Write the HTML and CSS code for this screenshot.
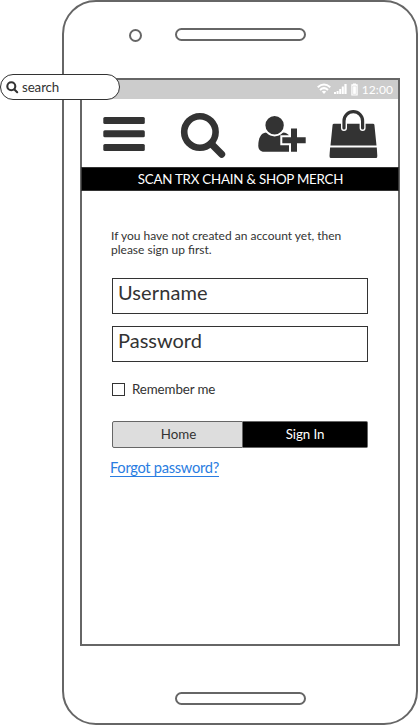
FILE: index.html
```html
<!DOCTYPE html>
<html lang="en">
<head>
<meta charset="utf-8">
<title>Sign in</title>
<link rel="stylesheet" href="styles.css">
</head>
<body>
<main class="phone">
  <header class="phone-top"><span class="camera"></span><span class="speaker"></span></header>
  <section class="screen">
    <div class="status">
      <svg class="wifi" width="14" height="12" viewBox="0 0 14 12"><g fill="none" stroke="#fff" stroke-width="2"><path d="M.7 4.2Q7-1.2 13.3 4.2M3 6.9Q7 3.4 11 6.9"/></g><path d="M4.8 8.6Q7 7 9.2 8.6L7 11z" fill="#fff"/></svg>
      <svg class="signal" width="13" height="12" viewBox="0 0 13 12"><path d="M0 9h2v2H0zM2.600 8h2v3h-2zM5.200 6h2v5h-2zM7.800 3.500h2V11h-2zM10.400 1h2.200v10h-2.200z" fill="#fff"/></svg>
      <svg class="battery" width="7" height="13" viewBox="0 0 7 13"><path d="M2 .5h3v.8h1.700v11.200H.300V1.300H2z" fill="#fff"/><path d="M1.700 3v8.300h3.600V3z" fill="none" stroke="#ccc" stroke-width=".5"/></svg>
      <span class="clock">12:00</span>
    </div>
    <nav class="nav">
      <svg class="menu" width="42" height="35" viewBox="0 0 42 35"><g fill="#333"><rect x=".300" width="41.500" height="7" rx="1.500"/><rect x=".300" y="13.200" width="41.500" height="7" rx="1.500"/><rect x=".300" y="27" width="41.500" height="7" rx="1.500"/></g></svg>
      <svg class="find" width="46" height="46" viewBox="0 0 46 46"><g fill="none" stroke="#333"><circle cx="19.900" cy="19" r="15.700" stroke-width="6.600"/><path d="M31 30.500L41.700 41.200" stroke-width="7" stroke-linecap="round"/></g></svg>
      <svg class="add-user" width="49" height="38" viewBox="0 0 49 38"><g fill="#333"><path d="M8 17.500C2.500 17.800.300 24 .300 30.500c0 3.900 2 6.300 5.700 6.300H31V21q-1.500-3.500-6-3.500z"/><circle cx="16.600" cy="10.200" r="10.200" stroke="#fff" stroke-width="2"/><path d="M33 13.500h6v8.700h8.700v6H39v8.600h-6v-8.600h-8.700v-6H33z" stroke="#fff" stroke-width="4" paint-order="stroke"/></g></svg>
      <svg class="bag" width="49" height="49" viewBox="0 0 49 49"><path d="M5 14.700h39q1.200 0 1.400 1L47.500 36.500H1.500l2.100-20.800q.200-1 1.400-1z" fill="#333"/><path d="M1.100 38.500h46.700L48.300 47q0 2-1 2H1.600Q.5 49 .5 47z" fill="#333"/><path d="M15 19v-7a9.300 9.300 0 0 1 18.600 0v7" fill="none" stroke="#fff" stroke-width="6" stroke-linecap="round"/><path d="M15 19v-7a9.300 9.300 0 0 1 18.600 0v7" fill="none" stroke="#333" stroke-width="3.200" stroke-linecap="round"/></svg>
    </nav>
    <h1 class="banner"><span>SCAN TRX CHAIN &amp; SHOP MERCH</span></h1>
    <div class="form">
      <p class="intro">If you have not created an account yet, then<br>please sign up first.</p>
      <div class="field"><span class="username">Username</span></div>
      <div class="field"><span class="password">Password</span></div>
      <label class="remember"><span class="box"></span><span>Remember me</span></label>
      <div class="actions"><button class="home">Home</button><button class="signin">Sign In</button></div>
      <a class="forgot">Forgot password?</a>
    </div>
  </section>
  <footer class="phone-bottom"><span class="speaker"></span></footer>
</main>
<div class="search">
  <svg width="13" height="13" viewBox="0 0 13 13"><g fill="none" stroke="#333" stroke-width="2.100"><circle cx="5.300" cy="5.300" r="4"/><path d="M8.400 8.400l2.800 2.800" stroke-linecap="round"/></g></svg>
  <span>search</span>
</div>
</body>
</html>
```
FILE: styles.css
```css
* { box-sizing: border-box; }
body { margin: 0; background: #fff; color: #333; font-family: Lato, sans-serif; }
.phone { width: 356px; height: 725px; margin-left: 62px; border: 2px solid #666; border-radius: 34px; padding: 0 16px; background: #fff; }
.phone-top { height: 76px; display: flex; align-items: flex-start; padding: 26px 0 0 49px; }
.camera { width: 13px; height: 13px; margin-top: 1px; border: 2px solid #666; border-radius: 50%; }
.speaker { width: 131px; height: 13px; border: 2px solid #666; border-radius: 7px; }
.camera + .speaker { margin-left: 33px; }
.screen { width: 320px; height: 568px; border: 2px solid #666; }
.status { height: 19px; background: #ccc; color: #fff; display: flex; align-items: flex-start; justify-content: flex-end; padding: 3px 5px 0 0; }
.signal { margin-left: 3px; }
.battery { margin-left: 4px; }
.clock { margin-left: 4px; font-size: 12px; line-height: 14px; letter-spacing: .1px; }
.nav { height: 68px; display: flex; align-items: flex-start; padding-left: 21px; }
.menu { margin-top: 18px; }
.find { margin: 14px 0 0 35px; }
.add-user { margin: 16px 0 0 32px; }
.bag { margin: 10px 0 0 22px; }
.banner { margin: 0 -1px; height: 24px; border: 1px solid #333; background: #000; color: #fff; font-size: 13.33px; line-height: 22px; font-weight: 400; text-align: center; white-space: nowrap; letter-spacing: -.22px; padding-left: 1px; }
.form { padding: 38px 30px 0; }
.intro { margin: 0 0 21px -1px; font-size: 12px; line-height: 14px; white-space: nowrap; }
.field { width: 256px; height: 36px; margin-bottom: 12px; border: 1px solid #333; padding: 1px 0 0 5px; font-size: 20px; line-height: 25px; }
.username { letter-spacing: .1px; }
.remember { display: flex; align-items: center; height: 16px; margin-top: 19px; font-size: 13.33px; line-height: 16px; letter-spacing: -.1px; }
.box { width: 13px; height: 13px; margin-right: 7px; border: 1px solid #333; }
.actions { width: 256px; height: 27px; margin-top: 24px; display: flex; }
button { font: 13.33px/25px Lato, sans-serif; padding: 0; border: 1px solid #666; }
.home { width: 131px; color: #333; background: #ddd; border-radius: 2px 0 0 2px; padding-left: 2px; }
.signin { width: 125px; color: #fff; background: #000; border-left: 0; border-radius: 0 2px 2px 0; letter-spacing: -.1px; }
.forgot { display: block; width: 109px; height: 18px; margin: 11px 0 0 -2px; border-bottom: 1px solid #2a7de1; color: #2a7de1; font-size: 14.67px; line-height: 18px; letter-spacing: -.29px; white-space: nowrap; }
.phone-bottom { display: flex; padding: 46px 0 0 95px; }
.search { position: absolute; left: 0; top: 74px; width: 120px; height: 26px; border: 1px solid #333; border-radius: 13px; background: #fff; display: flex; align-items: center; padding-left: 5px; font-size: 13.33px; line-height: 18px; letter-spacing: -.1px; }
.search svg { margin-right: 3px; }
```
